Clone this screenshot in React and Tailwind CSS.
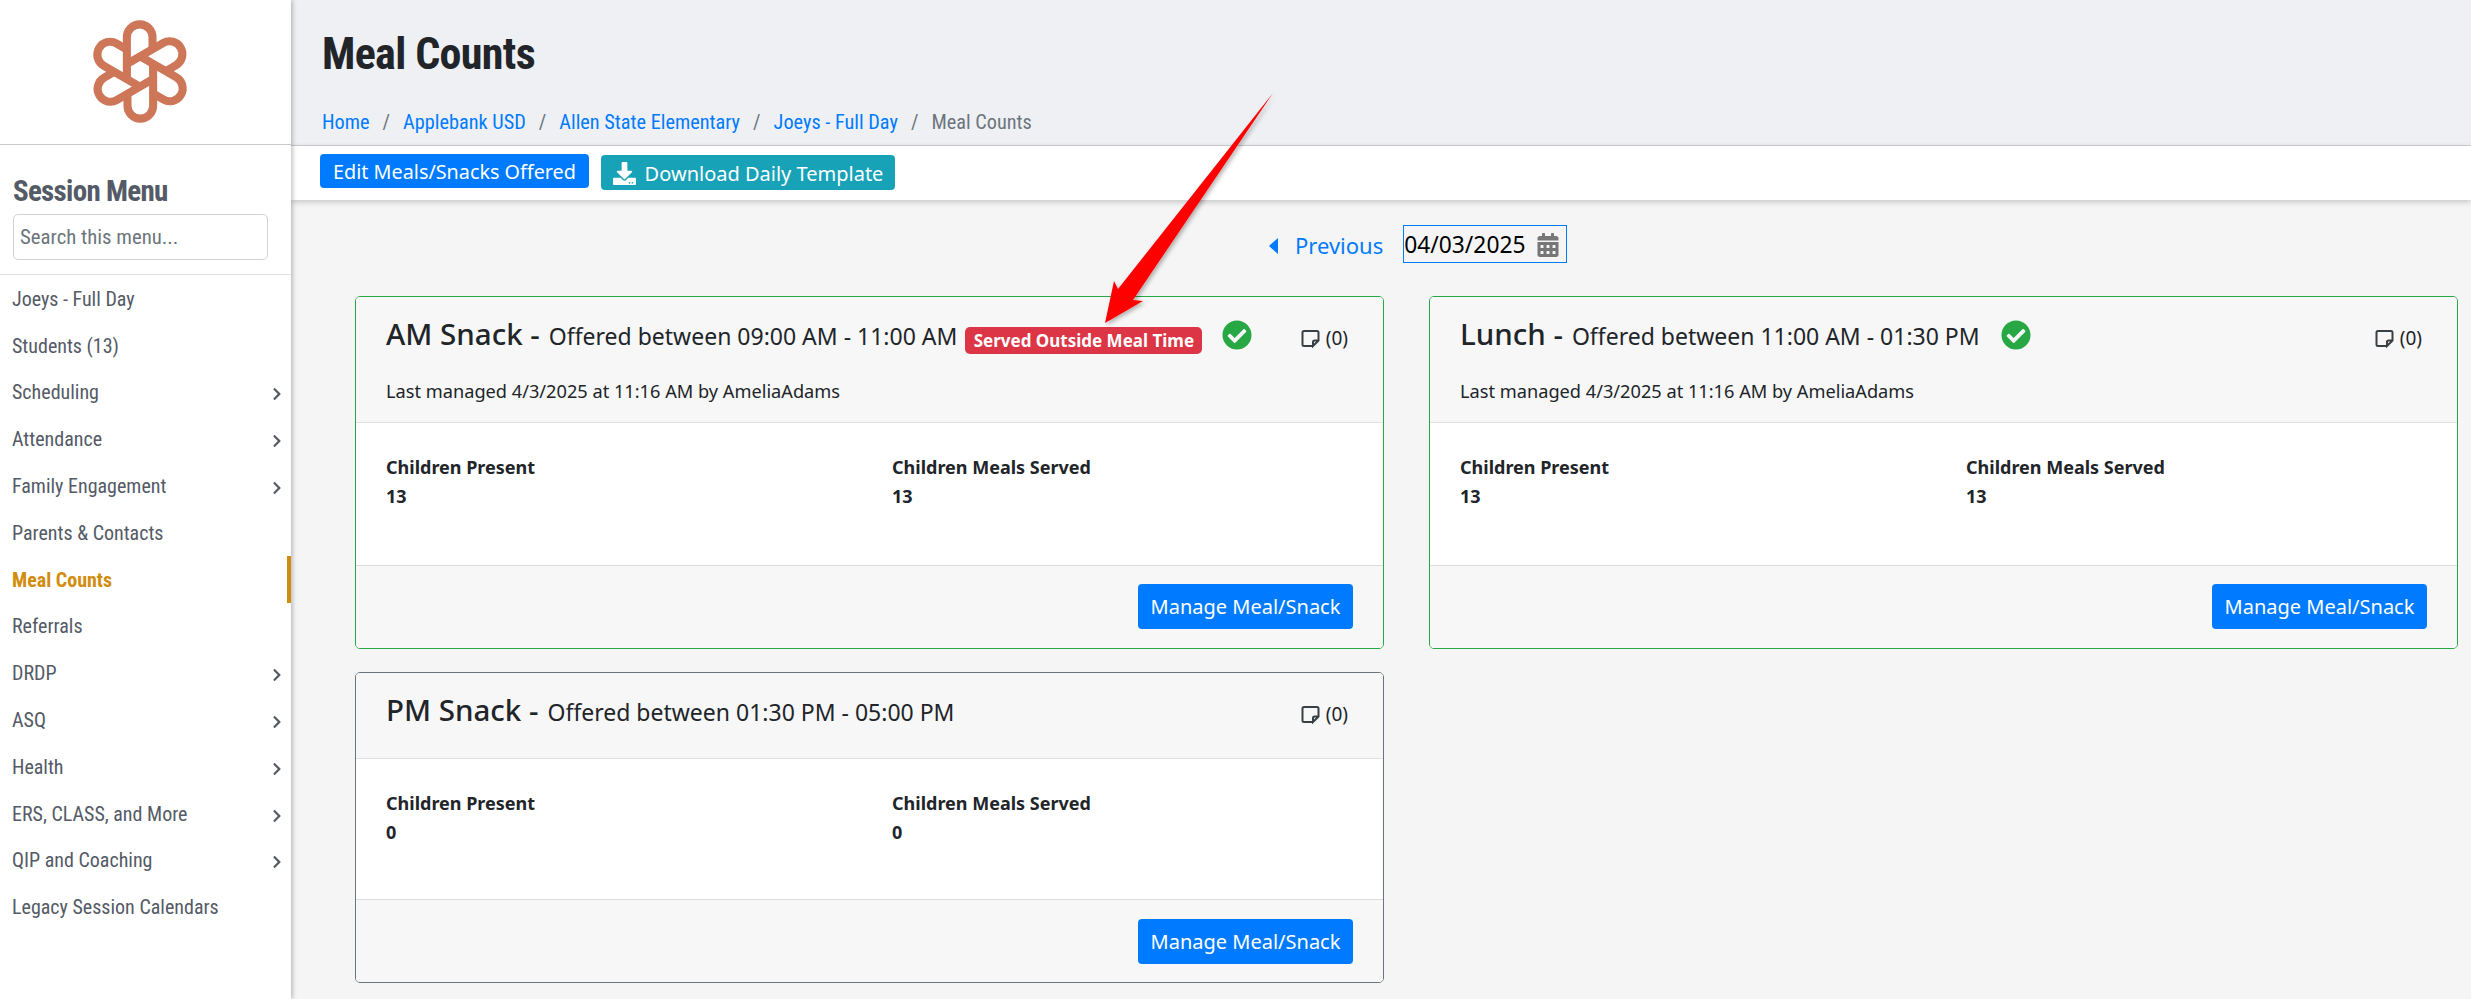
import React from "react";
import { FaCalendarAlt, FaCheckCircle, FaDownload, FaChevronRight } from "react-icons/fa";

const Logo = () => (
  <svg width="96" height="103" viewBox="0 0 94 102" fill="none" stroke="#cd7758" strokeWidth="8" strokeLinejoin="round">
    {[0, 60, 120, 180, 240, 300].map((a) => (
      <path key={a} transform={`rotate(${a} 47 51)`} d="M34 58.500 V17 A12.700 12.700 0 0 1 59.400 17 V28.800" />
    ))}
  </svg>
);

const menu = [
  ["Joeys - Full Day"], ["Students (13)"], ["Scheduling", 1], ["Attendance", 1], ["Family Engagement", 1],
  ["Parents & Contacts"], ["Meal Counts", 0, 1], ["Referrals"], ["DRDP", 1], ["ASQ", 1], ["Health", 1],
  ["ERS, CLASS, and More", 1], ["QIP and Coaching", 1], ["Legacy Session Calendars"],
];

const Card = ({ title, offered, ok, managed, value, badge, border }) => (
  <div className={`flex flex-col rounded-[5px] border overflow-hidden ${border}`}>
    <div className={`bg-[#f7f7f7] border-b border-[#dfdfe6] px-[30px] pt-[19px] ${managed ? "h-[126px]" : "h-[86px]"}`}>
      <div className="flex items-start">
        <span className="text-[29.500px] leading-[36px] font-medium text-[#212529]">{title} -</span>
        <span className="text-[23px] leading-[36px] text-[#212529] ml-[9px] mt-[2px]">Offered between {offered}</span>
        {badge && <span className="ml-[8px] mt-[11px] h-[27px] w-[237px] text-center rounded-[5px] bg-[#dc3545] text-white text-[17px] leading-[27px] font-bold">Served Outside Meal Time</span>}
        {ok && <FaCheckCircle className={`text-[#28a745] text-[30px] mt-[4px] ${badge ? "ml-[20px]" : "ml-[21px]"}`} />}
        <span className="ml-auto mt-[10px] mr-[5px] flex items-center text-[19px] leading-[24px] text-[#212529]">
          <svg width="19" height="19" viewBox="0 0 19 19" fill="none" stroke="#3a3f44" strokeWidth="2" className="mr-[6px]"><path d="M12 17 H3 a1.500 1.500 0 0 1 -1.500 -1.500 V3.500 A1.500 1.500 0 0 1 3 2 H16 a1.500 1.500 0 0 1 1.500 1.500 V11.500 L12 17 V13 a1.500 1.500 0 0 1 1.500 -1.500 H17.500" /></svg>
          (0)
        </span>
      </div>
      {managed && <div className="text-[18.200px] leading-[24px] text-[#212529] mt-[25px]">Last managed {managed} by AmeliaAdams</div>}
    </div>
    <div className="bg-white flex-1 px-[30px] pt-[30px] grid grid-cols-[506px_1fr] text-[18px] leading-[29px] font-bold text-[#212529] content-start">
      <div>Children Present<div>{value}</div></div>
      <div>Children Meals Served<div>{value}</div></div>
    </div>
    <div className={`bg-[#f7f7f7] border-t border-[#dcdcdf] h-[83px] flex justify-end items-start pr-[30px] ${managed ? "pt-[18px]" : "pt-[19px]"}`}>
      <button className="h-[45px] w-[215px] rounded-[4px] bg-[#007bff] text-white text-[20px] pt-[1px]">Manage Meal/Snack</button>
    </div>
  </div>
);

export default function App() {
  return (
    <div className="relative flex h-[999px] w-[2471px] overflow-hidden bg-[#f5f5f6] font-['Noto_Sans',sans-serif]">
      <aside className="w-[291px] shrink-0 bg-white h-full shadow-[1px_0_5px_rgba(0,0,0,0.3)] z-20 font-['Roboto',sans-serif] [font-stretch:85%] text-[#545a66]">
        <div className="h-[145px] border-b border-[#c9cacd] flex justify-center pt-[20px] pr-[12px]"><Logo /></div>
        <div className="px-[13px] pt-[25px]">
          <h2 className="text-[29px] leading-[42px] font-bold tracking-[-0.700px] text-[#545a66]">Session Menu</h2>
          <input readOnly placeholder="Search this menu..." className="block mt-[2px] w-[255px] h-[46px] rounded-[5px] border border-[#ced4da] px-[6px] text-[20.800px] placeholder:text-[#6c757d] outline-none" />
        </div>
        <div className="mt-[14px] border-t border-[#dfe1e5] pt-[0.500px]">
          {menu.map(([label, sub, active]) => (
            <div key={label} className={`relative flex items-center justify-between h-[46.800px] pl-[12px] pr-[7px] text-[20px] ${active ? "font-bold text-[#d28d0e] border-r-[4px] border-[#d28d0e]" : ""}`}>
              <span>{label}</span>
              {sub ? <FaChevronRight className="text-[14px] mt-[4px] text-[#545a66]" /> : null}
            </div>
          ))}
        </div>
      </aside>
      <div className="flex-1 flex flex-col min-w-0">
        <header className="h-[146px] shrink-0 bg-[#eff0f4] border-b border-[#cfd0d4] pl-[31px] font-['Roboto',sans-serif] [font-stretch:85%]">
          <h1 className="pt-[26px] text-[44px] leading-[56px] font-bold tracking-[-0.650px] text-[#212529]">Meal Counts</h1>
          <nav className="mt-[28px] flex items-center text-[20.300px] leading-[24px] text-[#007bff]">
            {["Home", "Applebank USD", "Allen State Elementary", "Joeys - Full Day"].map((b) => (
              <React.Fragment key={b}><span>{b}</span><span className="px-[13px] text-[#6c757d]">/</span></React.Fragment>
            ))}
            <span className="text-[#6c757d]">Meal Counts</span>
          </nav>
        </header>
        <div className="h-[54px] shrink-0 bg-white shadow-[0_2px_6px_rgba(0,0,0,0.2)] z-10 flex items-start gap-[12px] pl-[29px] pt-[8px]">
          <button className="h-[34px] w-[269px] rounded-[4px] bg-[#007bff] text-white text-[19.800px] pt-[2px]">Edit Meals/Snacks Offered</button>
          <button className="h-[35px] w-[294px] mt-[1px] pt-[2px] justify-center rounded-[4px] bg-[#17a2b8] text-white text-[20px] flex items-center gap-[9px]"><FaDownload className="text-[23px]" />Download Daily Template</button>
        </div>
        <main className="flex-1 min-h-0 relative">
          <div className="flex items-start h-[96px] pl-[978px] pt-[25px]">
            <svg width="9" height="16" viewBox="0 0 9 16" className="mt-[13px]"><path d="M9 0 V16 L0 8 Z" fill="#007bff" /></svg>
            <span className="text-[#007bff] text-[22px] leading-[40px] ml-[17px]">Previous</span>
            <div className="ml-[20px] h-[38px] w-[164px] border border-[#007bff] flex items-center text-[22.800px] text-black pt-[2px]">04/03/2025<FaCalendarAlt className="ml-[10px] text-[#777] text-[24px]" /></div>
          </div>
          <div className="grid grid-cols-[1029px_1029px] gap-x-[45px] gap-y-[23px] pl-[64px] items-start">
            <div className="h-[353px] grid"><Card title="AM Snack" offered="09:00 AM - 11:00 AM" ok badge managed="4/3/2025 at 11:16 AM" value="13" border="border-[#28a745]" /></div>
            <div className="h-[353px] grid"><Card title="Lunch" offered="11:00 AM - 01:30 PM" ok managed="4/3/2025 at 11:16 AM" value="13" border="border-[#28a745]" /></div>
            <div className="h-[311px] grid"><Card title="PM Snack" offered="01:30 PM - 05:00 PM" value="0" border="border-[#6c757d]" /></div>
          </div>
        </main>
      </div>
      <svg className="absolute left-0 top-0 z-30 pointer-events-none" width="2471" height="999">
        <defs><filter id="s"><feDropShadow dx="2" dy="2" stdDeviation="2" floodColor="#000" floodOpacity="0.3" /></filter></defs>
        <path d="M1273 93 L1133 300 L1143 301 L1105 323 L1114 281 L1118 289 Z" fill="#ff0000" filter="url(#s)" />
      </svg>
    </div>
  );
}
